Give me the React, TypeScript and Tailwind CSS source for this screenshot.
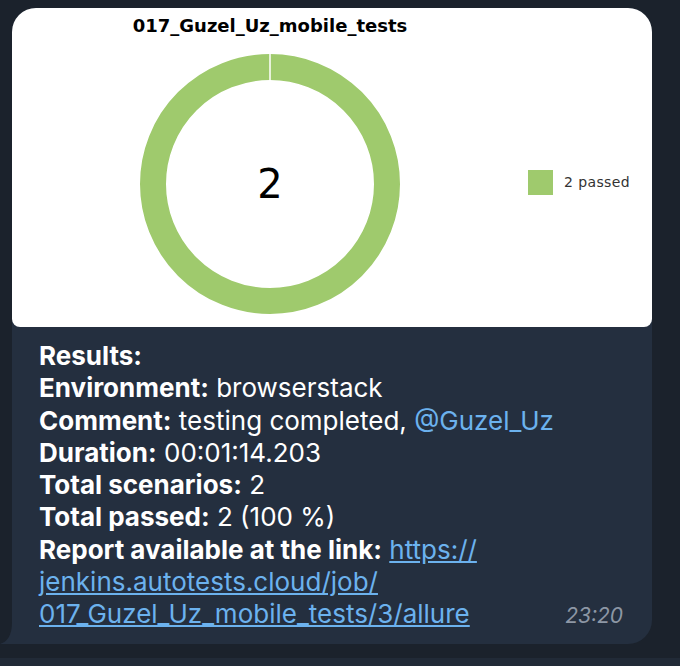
const rows: { label: string; value?: string }[] = [
  { label: "Environment:", value: "browserstack" },
];

function Donut() {
  return (
    <div className="relative h-[262px] w-[262px]">
      <svg width="262" height="262" viewBox="0 0 262 262">
        <circle cx="131" cy="131" r="117" fill="none" stroke="#9fca6d" strokeWidth="26" />
        <line x1="131" y1="0" x2="131" y2="28" stroke="#ffffff" strokeWidth="1.5" />
      </svg>
      <div className="absolute inset-0 flex items-center justify-center font-['DejaVu_Sans',sans-serif] text-[40px] text-black">
        2
      </div>
    </div>
  );
}

function Chart() {
  return (
    <div className="flex h-[319px] w-[640px] overflow-hidden rounded-t-[24px] rounded-b-[8px] bg-white">
      <div className="flex w-[516px] flex-col items-center">
        <div className="mt-[8px] font-['DejaVu_Sans',sans-serif] text-[18px] font-bold leading-[20px] text-black">
          017_Guzel_Uz_mobile_tests
        </div>
        <div className="mt-[17px]">
          <Donut />
        </div>
      </div>
      <div className="mt-[162px] flex h-[25px] items-center gap-[11px]">
        <div className="h-[25px] w-[25px] bg-[#9fca6d]" />
        <span className="font-['DejaVu_Sans',sans-serif] text-[14px] tracking-[0.4px] text-[#333]">2 passed</span>
      </div>
    </div>
  );
}

export default function App() {
  return (
    <div className="flex h-[666px] w-[680px] flex-col bg-[#1b222c] font-['Inter',sans-serif]">
      <div className="relative ml-[12px] mt-[8px] w-[640px] rounded-[24px] rounded-bl-none bg-[#242f3f]">
        <Chart />
        <div className="px-[27px] pb-[11px] pt-[13px] text-[26px] leading-[32.3px] text-white">
          <div className="font-bold">Results:</div>
          {rows.map((r) => (
            <div key={r.label}>
              <span className="font-bold">{r.label}</span> {r.value}
            </div>
          ))}
          <div>
            <span className="font-bold">Comment:</span> testing completed,{" "}
            <span className="text-[#6cb2ee]">@Guzel_Uz</span>
          </div>
          <div>
            <span className="font-bold">Duration:</span> 00:01:14.203
          </div>
          <div>
            <span className="font-bold">Total scenarios:</span> 2
          </div>
          <div>
            <span className="font-bold">Total passed:</span> 2 (100 %)
          </div>
          <div>
            <span className="font-bold">Report available at the link:</span>{" "}
            <span className="text-[#6cb2ee] underline">https://</span>
          </div>
          <div className="text-[#6cb2ee] underline">jenkins.autotests.cloud/job/</div>
          <div className="flex items-baseline">
            <span className="text-[#6cb2ee] underline">017_Guzel_Uz_mobile_tests/3/allure</span>
            <span className="ml-auto mr-[2px] text-[21px] italic text-[#8d97a5]">23:20</span>
          </div>
        </div>
        <svg className="absolute bottom-0 left-[-12px]" width="14" height="22" viewBox="0 0 14 22">
          <path d="M14 0 L14 22 L0 22 C7 20 12 14 12 0 Z" fill="#242f3f" />
        </svg>
      </div>
      <div className="mt-auto h-[8px] bg-[#212a37]" />
    </div>
  );
}
